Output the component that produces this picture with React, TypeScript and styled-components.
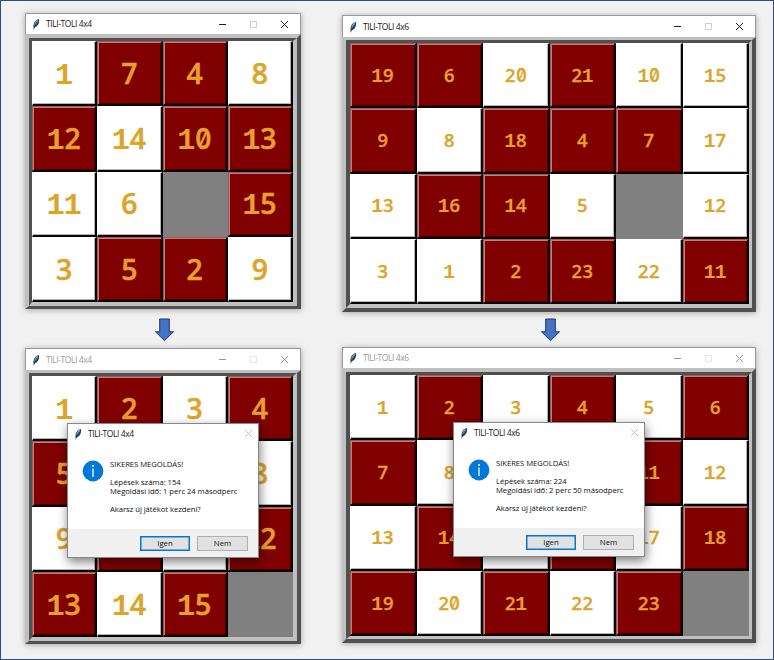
import React from 'react';
import styled, { createGlobalStyle, css } from 'styled-components';

const Global = createGlobalStyle`
  * { box-sizing: border-box; }
  body { margin: 0; }
`;

const Page = styled.main`
  width: 774px;
  height: 660px;
  display: flex;
  gap: 41px;
  padding-left: 24px;
  background: #f1f1f1;
  border: 1px solid #2f4b8c;
  overflow: hidden;
  font-family: 'Open Sans', 'Noto Sans', sans-serif;
`;

const Column = styled.section<{ $top: number }>`
  display: flex;
  flex-direction: column;
  align-items: center;
  padding-top: ${(p) => p.$top}px;
`;

const ArrowSlot = styled.div<{ $height: number; $top: number }>`
  height: ${(p) => p.$height}px;
  padding: ${(p) => p.$top}px 0 0 2px;
  line-height: 0;
`;

const Window = styled.article`
  position: relative;
  flex: none;
  box-shadow: 0 1px 6px rgba(0, 0, 0, 0.32);
`;

const TitleBar = styled.header<{ $height: number }>`
  height: ${(p) => p.$height}px;
  display: flex;
  align-items: center;
  padding: 0 11px 0 6px;
  background: #fff;
  border: 1px solid #999;
  border-bottom: 0;
`;

const Title = styled.h1<{ $dim?: boolean }>`
  flex: 1;
  margin: 0 0 0 5px;
  font-size: 8.5px;
  font-weight: 400;
  line-height: 12px;
  letter-spacing: -0.42px;
  white-space: nowrap;
  color: ${(p) => (p.$dim ? '#999' : '#1c1420')};
`;

const Controls = styled.div<{ $tone: string }>`
  display: flex;
  align-items: center;
  gap: 22px;
  color: ${(p) => p.$tone};
`;

type Edges = { outer: string; inner: string };

const Frame = styled.div<{ $edges: Edges }>`
  border-style: solid;
  border-color: #c0c0c0 #505050 #505050 #c0c0c0;
  border-width: ${(p) => p.$edges.outer};
`;

const Inset = styled.div<{ $edges: Edges }>`
  border-style: solid;
  border-color: #505050 #c0c0c0 #c0c0c0 #505050;
  border-width: ${(p) => p.$edges.inner};
`;

const Grid = styled.div<{ $cols: number; $width: number }>`
  display: grid;
  width: ${(p) => p.$width}px;
  height: 261px;
  grid-template-columns: repeat(${(p) => p.$cols}, 1fr);
  grid-template-rows: repeat(4, 1fr);
  background: #808080;
`;

const Tile = styled.div<{ $red: boolean }>`
  display: flex;
  justify-content: center;
  align-items: center;
  border-style: solid;
  border-width: 1px 2px 2px 1px;
  color: ${(p) => (p.$red ? '#e8a02c' : '#dba52a')};
  ${(p) =>
    p.$red
      ? css`
          background: #800000;
          border-color: #a05858 #080000 #080000 #a05858;
          box-shadow: inset 1px 1px 0 #bd8080, inset -1px -1px 0 #4b0000;
        `
      : css`
          background: #fff;
          border-color: #fff #050505 #050505 #fff;
          box-shadow: inset -1px -1px 0 #b4b4b4;
        `}
`;

/* The zero-width strut fixes the baseline whatever face each digit uses. */
const Value = styled.div<{ $size: number }>`
  display: flex;
  align-items: baseline;
  font-size: ${(p) => p.$size}px;
  line-height: 1;
  &::before {
    content: '\\200b';
    width: 0;
  }
`;

const Digit = styled.span<{ $kind: 'one' | 'zero' | 'other' }>`
  width: 0.6em;
  display: flex;
  justify-content: center;
  line-height: 0;
  font-weight: 600;
  -webkit-text-stroke: 0.018em currentColor;
  ${(p) =>
    p.$kind === 'one' &&
    css`
      font-family: 'Liberation Mono', monospace;
      font-weight: 700;
      font-size: 1.07em;
      width: 0.56em;
      -webkit-text-stroke: 0;
    `}
  ${(p) =>
    p.$kind === 'zero' &&
    css`
      font-family: Inter, sans-serif;
      font-size: 0.98em;
      font-feature-settings: 'zero';
      transform: scaleX(0.88);
    `}
`;

const Dialog = styled.aside<{ $left: number }>`
  position: absolute;
  left: ${(p) => p.$left}px;
  top: 75px;
  width: 192px;
  height: 135px;
  display: flex;
  flex-direction: column;
  background: #fff;
  border: 1px solid #888;
  box-shadow: 1px 4px 10px rgba(0, 0, 0, 0.5);
`;

const DialogBar = styled.header`
  display: flex;
  align-items: center;
  height: 19px;
  padding: 0 5px 0 6px;
`;

const DialogBody = styled.div`
  flex: 1;
  display: flex;
  gap: 6px;
  padding: 17px 0 0 14px;
`;

const Message = styled.div`
  font-size: 7.7px;
  line-height: 9px;
  letter-spacing: -0.05px;
  color: #111;
  white-space: pre;
`;

const DialogFooter = styled.footer`
  height: 28px;
  display: flex;
  justify-content: flex-end;
  align-items: center;
  gap: 7px;
  padding-right: 10px;
  background: #f0f0f0;
`;

const Button = styled.button<{ $primary?: boolean }>`
  width: ${(p) => (p.$primary ? 50 : 51)}px;
  height: 15px;
  padding: 0;
  font: 7.8px/11px 'Open Sans', 'Noto Sans', sans-serif;
  color: #111;
  background: #e1e1e1;
  border: ${(p) => (p.$primary ? '1px solid #0078d7' : '1px solid #b0b0b0')};
  ${(p) => p.$primary && 'box-shadow: inset 0 0 0 0.5px #0078d7;'}
`;

const Feather = () => (
  <svg width="9" height="12" viewBox="0 0 9 12">
    <path d="M1.8 10 C.9 6.4 2.4 1.8 7 .9 C7.6 4.2 6.2 8 3 9.2Z" fill="#1d3d5c" />
    <path d="M2.4 8 C2.4 5 3.8 2.6 6 1.5 C5.8 4 4.4 6.4 2.4 8Z" fill="#8dbbe0" />
    <path d="M1.7 11.4 C2.3 8.4 3.4 6 5 3.8" fill="none" stroke="#0e2233" strokeWidth=".6" />
  </svg>
);

const Cross = () => (
  <svg width="9" height="9" viewBox="0 0 9 9">
    <path d="M1 1 8 8M8 1 1 8" stroke="currentColor" strokeWidth="1" />
  </svg>
);

const WindowControls = ({ dim }: { dim: boolean }) => (
  <Controls $tone={dim ? '#999' : '#222'}>
    <svg width="9" height="9" viewBox="0 0 9 9">
      <path d="M1 4.5h7" stroke="currentColor" />
    </svg>
    <svg width="9" height="9" viewBox="0 0 9 9">
      <rect x="1.5" y="1.5" width="6" height="6" fill="none" stroke={dim ? '#e6e6e6' : '#d0d0d0'} />
    </svg>
    <Cross />
  </Controls>
);

const InfoIcon = () => (
  <svg width="22" height="22" viewBox="0 0 22 22">
    <circle cx="11" cy="11" r="10.4" fill="#0078d7" />
    <circle cx="11" cy="5.9" r="1" fill="#fff" />
    <path d="M11 8.4v8.6" stroke="#fff" strokeWidth="1.3" />
  </svg>
);

const Arrow = () => (
  <svg width="21" height="24" viewBox="0 0 21 24">
    <path d="M5.7 1h9.6v12.8h4.2L10.5 22.6 1.5 13.8h4.2z" fill="#4472c4" stroke="#1f3864" strokeWidth="1" />
  </svg>
);

const kindOf = (c: string) => (c === '1' ? 'one' : c === '0' ? 'zero' : 'other');

type PuzzleProps = {
  name: string;
  tiles: string;
  cols: number;
  bar: number;
  edges: Edges;
  result?: string[];
};

const Puzzle = ({ name, tiles, cols, bar, edges, result }: PuzzleProps) => {
  const cells = tiles.split(' ');
  return (
    <Window>
      <TitleBar $height={bar}>
        <Feather />
        <Title $dim={!!result}>{name}</Title>
        <WindowControls dim={!!result} />
      </TitleBar>
      <Frame $edges={edges}>
        <Inset $edges={edges}>
          <Grid $cols={cols} $width={cols === 4 ? 261 : 399}>
            {cells.map((cell, i) => {
              if (cell === '_') return <span key={i} />;
              const red = cell.endsWith('r');
              const value = cell.replace('r', '');
              return (
                <Tile key={i} $red={red}>
                  <Value $size={cols === 4 ? 28.4 : 18.4}>
                    {value.split('').map((c, j) => (
                      <Digit key={j} $kind={kindOf(c)}>{c}</Digit>
                    ))}
                  </Value>
                </Tile>
              );
            })}
          </Grid>
        </Inset>
      </Frame>
      {result && (
        <Dialog $left={cols === 4 ? 42 : 111}>
          <DialogBar>
            <Feather />
            <Title>{name}</Title>
            <Controls $tone="#c4c4c4"><Cross /></Controls>
          </DialogBar>
          <DialogBody>
            <InfoIcon />
            <Message>{result.join('\n')}</Message>
          </DialogBody>
          <DialogFooter>
            <Button $primary>Igen</Button>
            <Button>Nem</Button>
          </DialogFooter>
        </Dialog>
      )}
    </Window>
  );
};

const message = (steps: number, time: string) => [
  'SIKERES MEGOLDÁS!',
  '',
  `Lépések száma: ${steps}`,
  `Megoldási idő: ${time}`,
  '',
  'Akarsz új játékot kezdeni?',
];

export default function App() {
  return (
    <Page>
      <Global />
      <Column $top={12}>
        <Puzzle
          name="TILI-TOLI 4x4"
          cols={4}
          bar={21}
          edges={{ outer: '4px 4px 3px 4px', inner: '3px 4px 4px 3px' }}
          tiles="1 7r 4r 8 12r 14 10r 13r 11 6 _ 15r 3 5r 2r 9"
        />
        <ArrowSlot $height={39} $top={9}><Arrow /></ArrowSlot>
        <Puzzle
          name="TILI-TOLI 4x4"
          cols={4}
          bar={22}
          edges={{ outer: '3px 4px 3px 4px', inner: '3px 4px 4px 3px' }}
          tiles="1 2r 3 4r 5r 6 7r 8 9 10r 11 12r 13r 14 15r _"
          result={message(154, '1 perc 24 másodperc')}
        />
      </Column>
      <Column $top={14}>
        <Puzzle
          name="TILI-TOLI 4x6"
          cols={6}
          bar={22}
          edges={{ outer: '3px 4px 4px 4px', inner: '3px 3px 4px 4px' }}
          tiles="19r 6r 20 21r 10 15 9r 8 18r 4r 7r 17 13 16r 14r 5 _ 12 3 1 2r 23r 22 11r"
        />
        <ArrowSlot $height={35} $top={6}><Arrow /></ArrowSlot>
        <Puzzle
          name="TILI-TOLI 4x6"
          cols={6}
          bar={21}
          edges={{ outer: '4px 4px 4px 4px', inner: '3px 3px 3px 4px' }}
          tiles="1 2r 3 4r 5 6r 7r 8 9r 10 11r 12 13 14r 15 16r 17 18r 19r 20 21r 22 23r _"
          result={message(224, '2 perc 50 másodperc')}
        />
      </Column>
    </Page>
  );
}
